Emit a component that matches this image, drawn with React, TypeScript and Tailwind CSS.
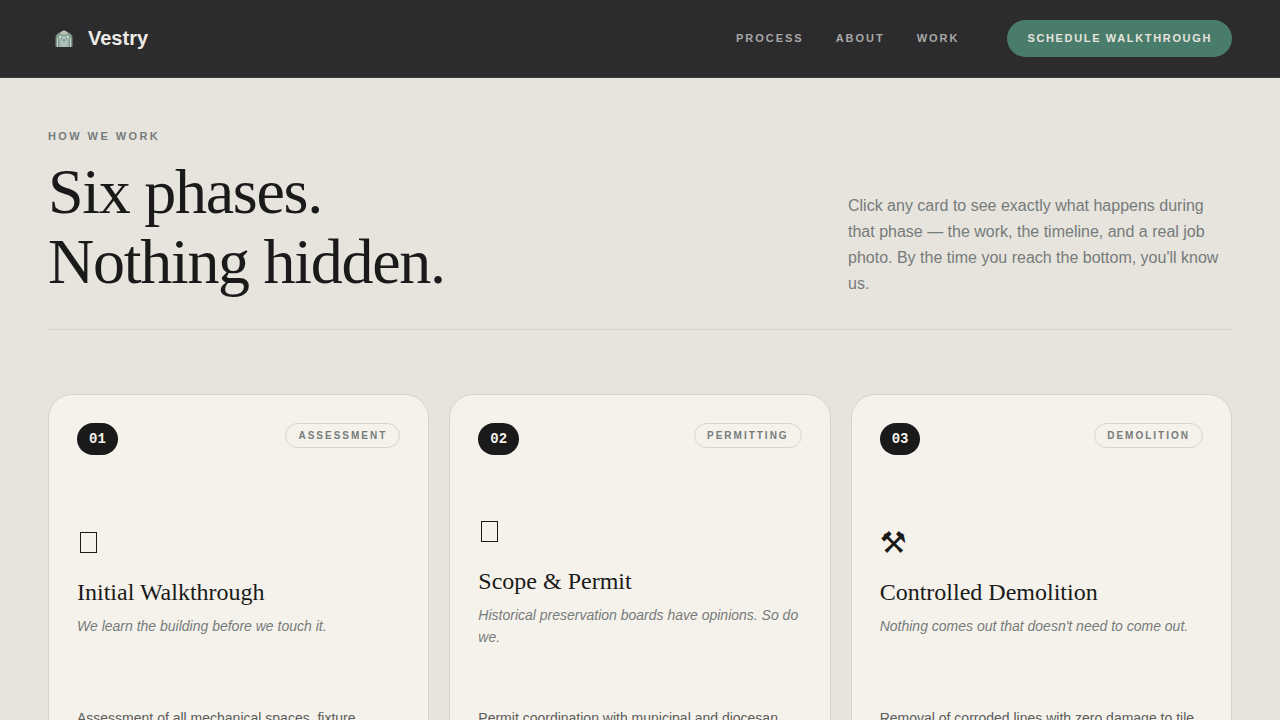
import React from 'react'

const navLinks = ['Process', 'About', 'Work']

const phases = [
    {
        number: '01',
        tag: 'Assessment',
        icon: null,
        title: 'Initial Walkthrough',
        tagline: 'We learn the building before we touch it.',
        text: 'Assessment of all mechanical spaces, fixture',
    },
    {
        number: '02',
        tag: 'Permitting',
        icon: null,
        title: 'Scope & Permit',
        tagline: 'Historical preservation boards have opinions. So do we.',
        text: 'Permit coordination with municipal and diocesan',
    },
    {
        number: '03',
        tag: 'Demolition',
        icon: '⚒',
        title: 'Controlled Demolition',
        tagline: "Nothing comes out that doesn't need to come out.",
        text: 'Removal of corroded lines with zero damage to tile',
    },
]

const Logo = () => (
    <svg viewBox="0 0 32 32" className="w-8 h-8" aria-hidden="true">
        <path d="M7.500 24V15c0-3.500 3-6.500 8.500-6.500s8.500 3 8.500 6.500v9z" fill="#7d9289" />
        <path d="M12.500 10c.5-3.500 6.500-3.500 7 0z" fill="#c4bfa2" />
        <path d="M9.500 24v-9M12 24V12M20 24V12M22.500 24v-9" stroke="#c3d8cd" strokeWidth="1" />
        <path d="M14 24v-7c0-2 4-2 4 0v7M16 24v-6" stroke="#dbe9e1" strokeWidth="1" fill="none" />
        <path d="M10.500 14h11M12.500 11h7" stroke="#dbe9e1" strokeWidth="1" />
    </svg>
)

const PhaseIcon = ({ icon }: { icon: string | null }) => {
    if (icon) {
        return <span className="block h-9 font-['DejaVu_Sans'] text-[30px] leading-9">{icon}</span>
    }
    return (
        <svg viewBox="0 0 24 36" className="block w-6 h-9" fill="none" stroke="currentColor" aria-hidden="true">
            <rect x="3.500" y="7.500" width="16" height="20" />
        </svg>
    )
}

const Header = () => (
    <header className="flex items-center justify-between bg-[#2c2c2e] border-b border-[#3a3a38] px-12 py-5">
        <a href="#" className="flex items-center gap-2 text-xl leading-6 font-bold text-[#eeece7]">
            <Logo />
            <span className="pb-0.5">Vestry</span>
        </a>
        <div className="flex items-center gap-12">
            <nav className="flex gap-8">
                {navLinks.map((link) => (
                    <a
                        key={link}
                        href={`#${link.toLowerCase()}`}
                        className="pb-px text-[11px] leading-4 font-bold uppercase tracking-[0.18em] text-[#a9a8a6]"
                    >
                        {link}
                    </a>
                ))}
            </nav>
            <button className="h-[37px] rounded-full bg-[#4a7c6c] px-5 text-[11px] font-bold uppercase tracking-[0.15em] text-[#e6e4dd]">
                Schedule Walkthrough
            </button>
        </div>
    </header>
)

const App = () => {
    return (
        <div className="min-h-screen bg-[#e6e4dd] font-['Liberation_Sans',sans-serif] text-[#1a1a1a]">
            <Header />

            <main id="process" className="px-12 pt-12 pb-16">
                {/* Intro */}
                <div className="flex items-end justify-between gap-8 border-b border-[#d6d4cd] pb-8">
                    <div>
                        <p className="mb-[11px] text-[11px] leading-5 font-bold uppercase tracking-[0.22em] text-[#767b7b]">
                            How we work
                        </p>
                        <h1 className="font-['Liberation_Serif',serif] text-[64px] leading-[70px] tracking-[-0.02em]">
                            Six phases.
                            <br />
                            Nothing hidden.
                        </h1>
                    </div>
                    <p className="max-w-96 text-base leading-[26px] text-[#767b7b]">
                        Click any card to see exactly what happens during that phase — the work, the timeline, and a
                        real job photo. By the time you reach the bottom, you'll know us.
                    </p>
                </div>

                {/* Phase cards */}
                <div className="mt-16 grid grid-cols-3 gap-5">
                    {phases.map((phase) => (
                        <article
                            key={phase.number}
                            className="flex min-h-[420px] flex-col rounded-3xl border border-[#d6d4cd] bg-[#f5f2eb] p-7"
                        >
                            <div className="flex items-start justify-between">
                                <span className="rounded-full bg-[#1a1a1a] px-3 py-1.5 font-['Liberation_Mono',monospace] text-sm leading-5 font-bold text-[#f5f2eb]">
                                    {phase.number}
                                </span>
                                <span className="rounded-full border border-[#d6d4cd] px-3 py-1 text-[10px] leading-[15px] font-bold uppercase tracking-[0.2em] text-[#767b7b]">
                                    {phase.tag}
                                </span>
                            </div>
                            <div className="flex h-[252px] flex-col justify-center">
                                <PhaseIcon icon={phase.icon} />
                                <h2 className="mt-4 mb-2 font-['Liberation_Serif',serif] text-2xl leading-[30px]">
                                    {phase.title}
                                </h2>
                                <p className="text-sm leading-[22px] text-[#767b7b] italic">{phase.tagline}</p>
                            </div>
                            <p className="text-sm leading-[22px] text-[#5b5d5b]">{phase.text}</p>
                        </article>
                    ))}
                </div>
            </main>
        </div>
    )
}

export default App
